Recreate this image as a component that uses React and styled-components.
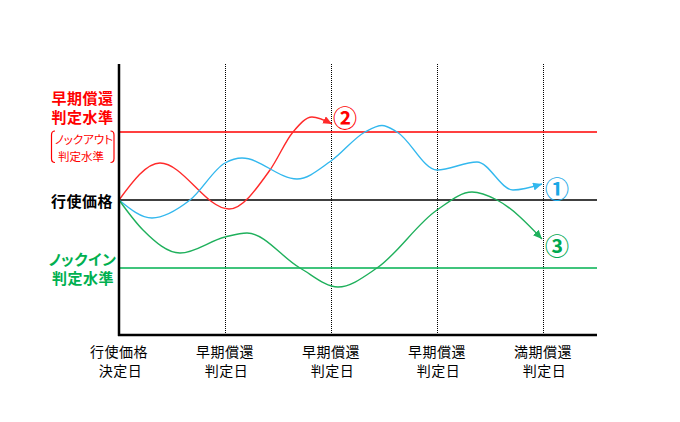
import React from 'react';
import styled, { createGlobalStyle } from 'styled-components';

const GlobalStyle = createGlobalStyle`
  html, body {
    margin: 0;
    padding: 0;
    background: #fff;
  }
`;

const FONT = `"Noto Sans CJK JP", "Noto Sans", sans-serif`;

const Frame = styled.div`
  width: 680px;
  height: 422px;
  background: #fff;
  overflow: hidden;
`;

const ChartSvg = styled.svg`
  display: block;
  font-family: ${FONT};
`;

const Axis = styled.line`
  stroke: #000;
  stroke-width: 2.5;
`;

const DateGuide = styled.line`
  stroke: #000;
  stroke-width: 1;
  stroke-dasharray: 1 1;
  shape-rendering: crispEdges;
`;

const LevelLine = styled.line`
  stroke: ${({ $color }) => $color};
  stroke-width: 1.3;
`;

const Curve = styled.path`
  fill: none;
  stroke: ${({ $color }) => $color};
  stroke-width: 1.4;
`;

const LevelLabel = styled.text`
  fill: ${({ $color }) => $color};
  font-size: 15px;
  font-weight: 700;
  letter-spacing: 0.5px;
  text-anchor: middle;
  dominant-baseline: central;
  font-feature-settings: ${({ $kana }) => ($kana ? '"palt"' : 'normal')};
`;

const NoteLabel = styled.text`
  fill: #ff0000;
  font-size: 11.5px;
  text-anchor: middle;
  dominant-baseline: central;
  font-feature-settings: ${({ $kana }) => ($kana ? '"palt"' : 'normal')};
`;

const Bracket = styled.path`
  fill: none;
  stroke: #ff0000;
  stroke-width: 1.2;
`;

const DateLabel = styled.text`
  fill: #000;
  font-size: 14px;
  letter-spacing: 0.5px;
  text-anchor: middle;
  dominant-baseline: central;
`;

const CaseMark = styled.text`
  fill: ${({ $color }) => $color};
  font-size: 24px;
  font-weight: 700;
  text-anchor: middle;
  dominant-baseline: central;
`;

// monotone cubic through the points (same idea as d3 curveMonotoneX)
const sign = (v) => (v < 0 ? -1 : 1);

const monotonePath = (pts) => {
  const n = pts.length;
  const m = new Array(n);
  for (let i = 1; i < n - 1; i++) {
    const [x0, y0] = pts[i - 1];
    const [x1, y1] = pts[i];
    const [x2, y2] = pts[i + 1];
    const h0 = x1 - x0;
    const h1 = x2 - x1;
    const s0 = (y1 - y0) / h0;
    const s1 = (y2 - y1) / h1;
    const p = (s0 * h1 + s1 * h0) / (h0 + h1);
    m[i] = (sign(s0) + sign(s1)) * Math.min(Math.abs(s0), Math.abs(s1), 0.5 * Math.abs(p)) || 0;
  }
  const end = (a, b, t) => (3 * (b[1] - a[1]) / (b[0] - a[0]) - t) / 2;
  m[0] = end(pts[0], pts[1], m[1]);
  m[n - 1] = end(pts[n - 2], pts[n - 1], m[n - 2]);

  let d = `M${pts[0][0]},${pts[0][1]}`;
  for (let i = 0; i < n - 1; i++) {
    const [x0, y0] = pts[i];
    const [x1, y1] = pts[i + 1];
    const h = (x1 - x0) / 3;
    d += ` C${x0 + h},${y0 + m[i] * h} ${x1 - h},${y1 - m[i + 1] * h} ${x1},${y1}`;
  }
  return d;
};

const X0 = 119;
const X1 = 597;
const TOP = 64;
const BOTTOM = 335;

const levels = [
  { y: 132, color: '#ff0000' },
  { y: 200, color: '#000000' },
  { y: 268, color: '#00b050' },
];

const dates = [
  { x: 119, top: '行使価格', bottom: '決定日', guide: false },
  { x: 225, top: '早期償還', bottom: '判定日', guide: true },
  { x: 331, top: '早期償還', bottom: '判定日', guide: true },
  { x: 437, top: '早期償還', bottom: '判定日', guide: true },
  { x: 543, top: '満期償還', bottom: '判定日', guide: true },
];

const curves = [
  {
    id: 'red',
    color: '#ff2a2a',
    points: [
      [119, 200], [160, 163], [229, 209], [270, 170], [293, 132], [312, 117], [332, 124],
    ],
  },
  {
    id: 'blue',
    color: '#33b8ee',
    points: [
      [119, 200], [152, 218], [190, 200], [225, 163], [242, 158], [297, 179], [331, 161],
      [365, 132], [382, 125.5], [397, 132], [437, 170], [477, 162], [513, 190], [542, 184],
    ],
  },
  {
    id: 'green',
    color: '#1fb05c',
    points: [
      [119, 200], [143, 230], [180, 253], [225, 237], [247, 233], [300, 268], [338, 287],
      [377, 268], [437, 210], [472, 192], [497, 200], [542, 239],
    ],
  },
];

const marks = [
  { x: 345, y: 116, label: '②', color: '#ff0000' },
  { x: 557, y: 187, label: '①', color: '#1aa8e6' },
  { x: 557, y: 244, label: '③', color: '#00a850' },
];

const App = () => (
  <Frame>
    <GlobalStyle />
    <ChartSvg width="680" height="422" viewBox="0 0 680 422">
      <defs>
        {curves.map((c) => (
          <marker
            key={c.id}
            id={`head-${c.id}`}
            markerUnits="userSpaceOnUse"
            markerWidth="10"
            markerHeight="8"
            refX="9"
            refY="4"
            orient="auto"
          >
            <path d="M0,0 L9,4 L0,8 Z" fill={c.color} />
          </marker>
        ))}
      </defs>

      {dates.filter((d) => d.guide).map((d) => (
        <DateGuide key={d.x} x1={d.x + 0.5} x2={d.x + 0.5} y1={TOP} y2={BOTTOM} />
      ))}

      {levels.map((l) => (
        <LevelLine key={l.y} x1={X0} x2={X1} y1={l.y} y2={l.y} $color={l.color} />
      ))}

      {curves.map((c) => (
        <Curve
          key={c.id}
          d={monotonePath(c.points)}
          $color={c.color}
          markerEnd={`url(#head-${c.id})`}
        />
      ))}

      <Axis x1={X0} x2={X0} y1={TOP} y2={BOTTOM + 1} />
      <Axis x1={X0 - 1} x2={X1} y1={BOTTOM} y2={BOTTOM} />

      <LevelLabel x="82.5" y="97.5" $color="#ff0000">早期償還</LevelLabel>
      <LevelLabel x="82.5" y="116.5" $color="#ff0000">判定水準</LevelLabel>

      <Bracket d="M55,131 Q51.5,131 51.5,135 L51.5,158.5 Q51.5,162.5 55,162.5" />
      <Bracket d="M110.5,131 Q114,131 114,135 L114,158.5 Q114,162.5 110.5,162.5" />
      <NoteLabel x="84" y="139" $kana>ノックアウト</NoteLabel>
      <NoteLabel x="81" y="156">判定水準</NoteLabel>

      <LevelLabel x="82" y="200.5" $color="#000">行使価格</LevelLabel>

      <LevelLabel x="82.5" y="258.5" $color="#00b050" $kana>ノックイン</LevelLabel>
      <LevelLabel x="83" y="277" $color="#00b050">判定水準</LevelLabel>

      {dates.map((d) => (
        <g key={`label-${d.x}`}>
          <DateLabel x={d.x} y="350.5">{d.top}</DateLabel>
          <DateLabel x={d.x + 1.5} y="369.5">{d.bottom}</DateLabel>
        </g>
      ))}

      {marks.map((m) => (
        <CaseMark key={m.label} x={m.x} y={m.y} $color={m.color}>{m.label}</CaseMark>
      ))}
    </ChartSvg>
  </Frame>
);

export default App;
